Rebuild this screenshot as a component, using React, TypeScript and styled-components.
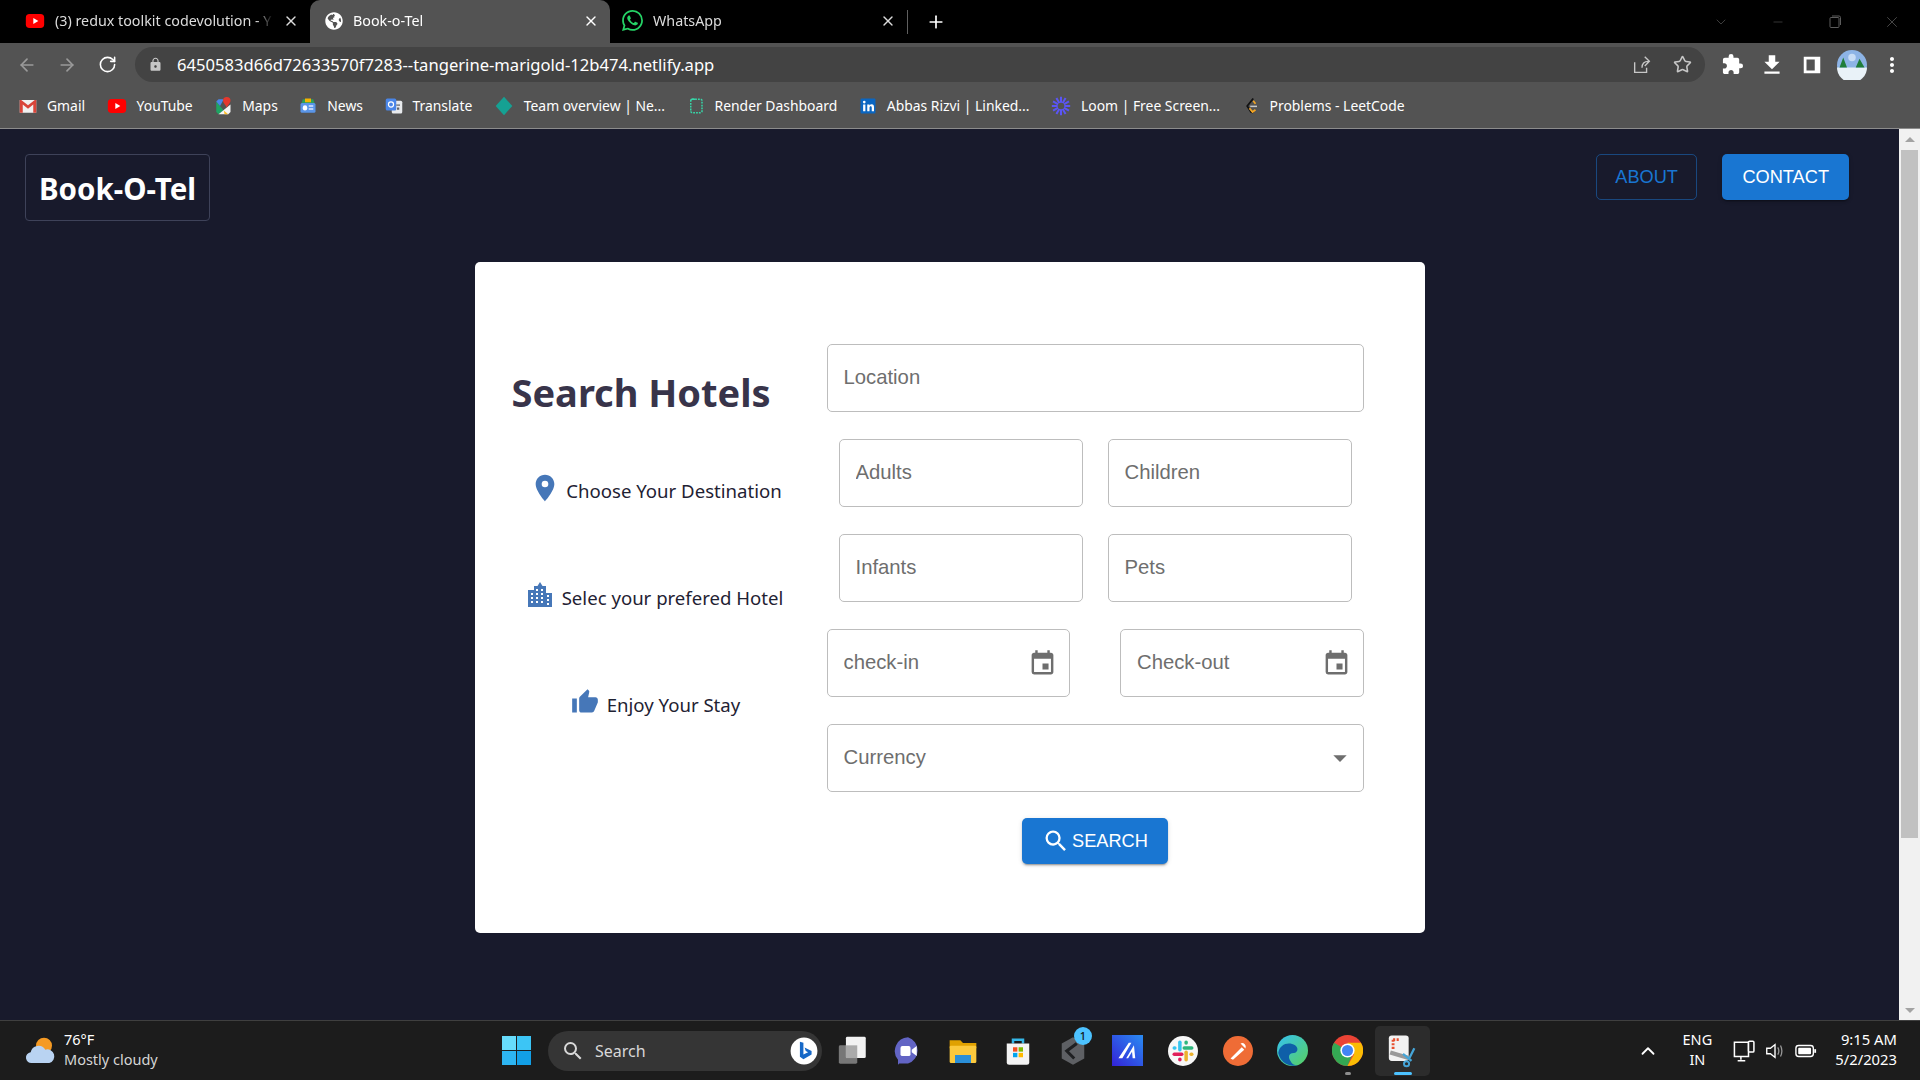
import styled, { createGlobalStyle } from "styled-components";
import { ArrowLeft, ArrowRight, RotateCw, Star, X, Plus, Minus, ChevronDown, ChevronUp } from "lucide-react";
import {
  MdLocationOn,
  MdThumbUp,
  MdEvent,
  MdSearch,
  MdArrowDropDown,
  MdLock,
  MdExtension,
  MdFileDownload,
  MdMoreVert,
  MdArrowDropUp,
} from "react-icons/md";
import { SiWhatsapp } from "react-icons/si";
import { FaGlobeAmericas } from "react-icons/fa";
import { ReactNode } from "react";

const GlobalStyle = createGlobalStyle`
  html, body {
    margin: 0;
    height: 100%;
    overflow: hidden;
  }
  * { box-sizing: border-box; }
`;

const UI_FONT = `"Noto Sans", "Open Sans", sans-serif`;
const MUI_FONT = `"Liberation Sans", Arial, sans-serif`;

const Screen = styled.div`
  width: 1920px;
  height: 1080px;
  display: flex;
  flex-direction: column;
  font-family: ${UI_FONT};
`;

/* browser chrome */
const TabStrip = styled.div`
  height: 43px;
  background: #000;
  display: flex;
  align-items: stretch;
  color: #fff;
  font-size: 14px;
`;

const Tab = styled.div<{ $w: number; $active?: boolean; $pl: number }>`
  position: relative;
  width: ${(p) => p.$w}px;
  padding: 0 11px 2px ${(p) => p.$pl}px;
  display: flex;
  align-items: center;
  gap: 10px;
  color: ${(p) => (p.$active ? "#fff" : "#dcdcdc")};
  background: ${(p) => (p.$active ? "#535353" : "transparent")};
  border-radius: 10px 10px 0 0;
`;

const TabTitle = styled.span`
  flex: 1;
  white-space: nowrap;
  font-size: 14.3px;
  mask-image: linear-gradient(to right, #000 92%, transparent 100%);
`;

const TabDivider = styled.div`
  width: 1px;
  height: 24px;
  align-self: center;
  background: #5f5f5f;
`;

const NewTab = styled.div`
  width: 56px;
  display: flex;
  align-items: center;
  justify-content: center;
`;

const WindowControls = styled.div`
  margin-left: auto;
  display: flex;
  align-items: center;
  color: #5c5c5c;
  padding-right: 0;
`;

const WindowButton = styled.div`
  width: 57px;
  height: 38px;
  display: flex;
  align-items: center;
  justify-content: center;
`;

const Toolbar = styled.div`
  height: 43px;
  background: #535353;
  display: flex;
  align-items: center;
  color: #fff;
  padding-left: 7px;
`;

const NavIcon = styled.div<{ $dim?: boolean }>`
  width: 40px;
  display: flex;
  justify-content: center;
  color: ${(p) => (p.$dim ? "#9a9a9a" : "#fff")};
`;

const Omnibox = styled.div`
  margin-left: 8px;
  width: 1570px;
  height: 35px;
  border-radius: 18px;
  background: #434343;
  display: flex;
  align-items: center;
  padding: 0 3px 0 13px;
  color: #c7c7c7;
`;

const Url = styled.span`
  margin-left: 14px;
  flex: 1;
  color: #fff;
  font-size: 16.6px;
`;

const OmniAction = styled.div`
  width: 40px;
  display: flex;
  justify-content: center;
`;

const ToolActions = styled.div`
  display: flex;
  align-items: center;
  margin-left: 7px;
`;

const ToolAction = styled.div`
  width: 40px;
  display: flex;
  justify-content: center;
  align-items: center;
`;

const BookmarkBar = styled.div`
  height: 43px;
  background: #535353;
  border-bottom: 1px solid #8c8c8c;
  display: flex;
  align-items: center;
  padding: 0 0 3px 19px;
  gap: 21.5px;
  color: #fff;
  font-size: 13.9px;
`;

const Bookmark = styled.div`
  display: flex;
  align-items: center;
  gap: 10px;
  white-space: nowrap;
`;

/* page */
const Viewport = styled.div`
  flex: 1;
  display: flex;
  min-height: 0;
`;

const Page = styled.main`
  flex: 1;
  background: #181a2c;
  padding: 25px 25px 0;
`;

const Nav = styled.nav`
  display: flex;
  justify-content: space-between;
  align-items: flex-start;
  padding-right: 25px;
`;

const Logo = styled.div`
  width: 185px;
  height: 67px;
  border: 1px solid #3e4259;
  border-radius: 4px;
  padding-top: 1px;
  display: flex;
  align-items: center;
  justify-content: center;
  color: #fff;
  font-size: 29.5px;
  font-weight: 700;
`;

const NavButtons = styled.div`
  display: flex;
  gap: 25px;
`;

const Button = styled.button<{ $outlined?: boolean }>`
  font-family: ${MUI_FONT};
  font-size: 18.2px;
  border-radius: 5px;
  cursor: pointer;
  height: 46px;
  padding: 0 ${(p) => (p.$outlined ? 18.5 : 20)}px;
  display: flex;
  align-items: center;
  color: ${(p) => (p.$outlined ? "#1976d2" : "#fff")};
  background: ${(p) => (p.$outlined ? "transparent" : "#1976d2")};
  border: ${(p) => (p.$outlined ? "1px solid rgba(25,118,210,.5)" : "none")};
  box-shadow: ${(p) => (p.$outlined ? "none" : "0 3px 1px -2px rgba(0,0,0,.2), 0 2px 2px 0 rgba(0,0,0,.14), 0 1px 5px 0 rgba(0,0,0,.12)")};
`;

const Card = styled.section`
  width: 950px;
  height: 671px;
  margin: 41px auto 0;
  background: #fff;
  border-radius: 5px;
  padding: 82px 61px 0 20px;
  display: flex;
  gap: 10px;
`;

const Intro = styled.div`
  width: 322px;
  padding-top: 24px;
  display: flex;
  flex-direction: column;
  align-items: center;
`;

const Title = styled.h1`
  align-self: flex-start;
  margin: 0 0 57px 17px;
  font-size: 38px;
  line-height: 48px;
  font-weight: 700;
  white-space: nowrap;
  color: #38344a;
`;

const Step = styled.div<{ $gap: number }>`
  height: 34px;
  margin-bottom: 73px;
  display: flex;
  align-items: center;
  gap: ${(p) => p.$gap}px;
  font-size: 18.6px;
  color: #1f2233;
  svg { color: #4677b8; flex: none; margin-top: -5px; }
`;

const FormColumn = styled.form`
  width: 537px;
  display: flex;
  flex-direction: column;
  gap: 27px;
`;

const FieldRow = styled.div<{ $inset?: boolean; $gap: number }>`
  display: flex;
  gap: ${(p) => p.$gap}px;
  padding: 0 ${(p) => (p.$inset ? 12 : 0)}px;
`;

const FieldBox = styled.div`
  flex: 1 1 0;
  min-width: 0;
  height: 68px;
  border: 1px solid #bdbdbd;
  border-radius: 5px;
  display: flex;
  align-items: center;
  position: relative;
  color: #6e6e6e;
`;

const FieldInput = styled.input`
  flex: 1;
  min-width: 0;
  width: 100%;
  height: 100%;
  border: none;
  outline: none;
  background: transparent;
  padding: 0 0 2px 16px;
  font-family: ${MUI_FONT};
  font-size: 20.3px;
  &::placeholder { color: #6e6e6e; opacity: 1; }
`;

const FieldIcon = styled.span<{ $pr: number }>`
  display: flex;
  padding-right: ${(p) => p.$pr}px;
`;

const SubmitRow = styled.div`
  display: flex;
  justify-content: center;
  margin-top: -1px;
`;

const SearchButton = styled(Button)`
  width: 146px;
  padding: 0;
  justify-content: center;
  gap: 2px;
`;

const ScrollTrack = styled.div`
  width: 21px;
  background: #f1f1f1;
  display: flex;
  flex-direction: column;
  align-items: center;
  color: #a3a3a3;
`;

const ScrollArrow = styled.div<{ $end?: boolean }>`
  height: 21px;
  margin-top: ${(p) => (p.$end ? "auto" : 0)};
  display: flex;
  align-items: center;
  justify-content: center;
`;

const ScrollThumb = styled.div`
  width: 17px;
  height: 688px;
  background: #c1c1c1;
`;

/* taskbar */
const Taskbar = styled.footer`
  height: 60px;
  background: #1c1c1c;
  border-top: 1px solid #3f3f3f;
  display: flex;
  align-items: center;
  color: #fff;
  font-family: ${UI_FONT};
`;

const Weather = styled.div`
  width: 502px;
  padding-left: 24px;
  display: flex;
  align-items: center;
  gap: 8px;
`;

const WeatherText = styled.div`
  font-size: 14.5px;
  line-height: 20px;
  margin-top: -4px;
  span { display: block; color: #d5d5d5; }
`;

const SearchPill = styled.div`
  margin-left: 17px;
  width: 274px;
  height: 40px;
  border-radius: 20px;
  background: #353535;
  display: flex;
  align-items: center;
  padding: 0 4px 0 13px;
  gap: 10px;
  color: #d8d8d8;
  font-size: 16px;
  span { flex: 1; }
`;

const AppIcons = styled.div`
  display: flex;
  margin-left: 3px;
`;

const AppIcon = styled.div<{ $active?: boolean }>`
  position: relative;
  width: 55px;
  height: 50px;
  display: flex;
  align-items: center;
  justify-content: center;
  border-radius: 5px;
  background: ${(p) => (p.$active ? "#2c2c2c" : "transparent")};
`;

const RunDot = styled.i<{ $active?: boolean }>`
  position: absolute;
  bottom: 1px;
  left: 50%;
  transform: translateX(-50%);
  width: ${(p) => (p.$active ? 18 : 6)}px;
  height: 3px;
  border-radius: 2px;
  background: ${(p) => (p.$active ? "#4cc2ff" : "#8e8e8e")};
`;

const Badge = styled.b`
  position: absolute;
  top: 1px;
  right: 8px;
  width: 18px;
  height: 18px;
  border-radius: 50%;
  background: #4cc2ff;
  color: #111;
  font-size: 11px;
  font-weight: 500;
  text-align: center;
  line-height: 18px;
`;

const Tray = styled.div`
  margin-left: auto;
  padding-right: 23px;
  display: flex;
  align-items: center;
`;

const TrayText = styled.div<{ $align: string; $ml?: number; $size: number }>`
  font-size: ${(p) => p.$size}px;
  line-height: 20px;
  margin-top: -3px;
  margin-left: ${(p) => p.$ml ?? 0}px;
  text-align: ${(p) => p.$align};
`;

const TrayIcons = styled.div`
  display: flex;
  align-items: center;
  gap: 9px;
  margin: 0 18px 0 17px;
`;

const Svg = ({ size = 18, box = 24, children }: { size?: number; box?: number; children: ReactNode }) => (
  <svg width={size} height={size} viewBox={`0 0 ${box} ${box}`} style={{ flex: "none" }}>
    {children}
  </svg>
);

const YouTubeIcon = () => (
  <Svg size={20}>
    <rect x="1" y="3.5" width="22" height="17" rx="4.5" fill="#f00" />
    <path d="M10 8.5l6 3.5-6 3.5z" fill="#fff" />
  </Svg>
);
const GmailIcon = () => (
  <Svg>
    <path d="M1 4h22v17H1z" fill="#f1f1f1" />
    <path d="M1 4v17h4V10l7 5.5 7-5.5v11h4V4h-2l-9 7-9-7z" fill="#d9453a" />
  </Svg>
);
const MapsIcon = () => (
  <Svg>
    <path d="M3 6l10 12-7 5-3-3z" fill="#1fa463" />
    <path d="M6 23L22 10v10l-3 3z" fill="#f5f5f5" />
    <path d="M3 6l3-3h7l-5 9z" fill="#4a86e8" />
    <path d="M13 18l6 5h-5z" fill="#fbc02d" />
    <path d="M17 0a5 5 0 0 1 5 5c0 3-3 5-5 9-2-4-5-6-5-9a5 5 0 0 1 5-5z" fill="#e5382e" />
  </Svg>
);
const NewsIcon = () => (
  <Svg>
    <path d="M5 3h14l2 6H3z" fill="#2e9e58" />
    <rect x="8" y="2" width="8" height="5" fill="#f4b400" />
    <rect x="2" y="8" width="20" height="13" rx="2" fill="#5a95e8" />
    <rect x="5" y="11" width="6" height="7" rx="3" fill="#fff" />
    <rect x="13" y="11" width="6" height="2" fill="#dbe8fb" />
    <rect x="13" y="15" width="6" height="2" fill="#dbe8fb" />
  </Svg>
);
const TranslateIcon = () => (
  <Svg>
    <rect x="9" y="5" width="14" height="17" rx="2" fill="#e8eaed" />
    <rect x="1" y="2" width="14" height="16" rx="2" fill="#4a86e8" />
    <circle cx="8" cy="10" r="3.4" fill="none" stroke="#fff" strokeWidth="1.6" />
    <rect x="15" y="10" width="5" height="1.6" fill="#5f6368" />
    <rect x="16" y="14" width="3" height="3" fill="#5f6368" />
  </Svg>
);
const TeamIcon = () => (
  <Svg size={20}>
    <path d="M12 1l10 11-10 11L2 12z" fill="#15a193" />
  </Svg>
);
const RenderIcon = () => (
  <Svg>
    <rect x="5" y="3" width="15" height="18" rx="2" fill="none" stroke="#37d6a8" strokeWidth="2" strokeDasharray="2.4 1.4" />
    <path d="M5 5a2 2 0 0 1 2-2h4" fill="none" stroke="#37d6a8" strokeWidth="2" />
  </Svg>
);
const LinkedInIcon = () => (
  <Svg>
    <rect x="2" y="2" width="20" height="20" rx="1.5" fill="#0a66c2" />
    <rect x="5.5" y="10" width="3" height="9" fill="#fff" />
    <circle cx="7" cy="6.8" r="1.8" fill="#fff" />
    <path d="M11 10h3v1.4c.7-1 1.700-1.600 3-1.600 2.200 0 3 1.500 3 4V19h-3v-4.600c0-1.200-.4-2-1.400-2-1.100 0-1.600.8-1.600 2V19h-3z" fill="#fff" />
  </Svg>
);
const LoomIcon = () => (
  <Svg size={20}>
    <g stroke="#5b55f5" strokeWidth="2.4">
      {[0, 30, 60, 90, 120, 150].map((a) => (
        <path key={a} d="M12 1v22" transform={`rotate(${a} 12 12)`} />
      ))}
    </g>
    <circle cx="12" cy="12" r="4" fill="#535353" />
  </Svg>
);
const LeetCodeIcon = () => (
  <Svg>
    <path d="M15 2L7 12l5 8 3 1" fill="none" stroke="#111" strokeWidth="2.4" />
    <path d="M10 15l4 5 4-3" fill="none" stroke="#f5a623" strokeWidth="2.4" />
    <path d="M15 5l3 4" fill="none" stroke="#f5a623" strokeWidth="2.2" />
    <rect x="11" y="11.500" width="9" height="2" fill="#c9c9c9" />
  </Svg>
);

const BuildingIcon = () => (
  <svg width="24" height="25" viewBox="0 0 24 25">
    <path
      fillRule="evenodd"
      fill="currentColor"
      d="M0 8h6V4h3.500L12 0l2.500 4H18v7h6v14H0zM3 11v2h2v-2zM3 15v2h2v-2zM3 19v2h2v-2zM8 7v2h2V7zM8 11v2h2v-2zM8 15v2h2v-2zM8 19v2h2v-2zM13 7v2h2V7zM13 11v2h2v-2zM13 15v2h2v-2zM13 19v2h2v-2zM19 13v2h2v-2zM19 17v2h2v-2zM19 21v2h2v-2z"
    />
  </svg>
);

const SidePanelIcon = () => (
  <Svg size={22}>
    <path fillRule="evenodd" d="M3 3h18v18H3zM6 6v12h9V6z" fill="#fff" />
  </Svg>
);

const ShareIcon = () => (
  <Svg size={22}>
    <path d="M4 9v11h13v-5M12 15c0-5 3-7 7-7M15 3l5 5-5 5" fill="none" stroke="#c7c7c7" strokeWidth="1.500" />
  </Svg>
);

const Avatar = () => (
  <Svg size={30}>
    <circle cx="12" cy="12" r="12" fill="#8db4e6" />
    <path d="M0 14h24a12 12 0 0 1-24 0z" fill="#e9f2f8" />
    <path d="M2 14l3-8 3 8zM15 14l3-7 4 7z" fill="#1f7d3a" />
    <circle cx="12" cy="6" r="3" fill="#c8ddf5" />
  </Svg>
);

const WeatherIcon = () => (
  <Svg size={32}>
    <circle cx="15" cy="8" r="6" fill="#f59a23" />
    <path d="M6 21a4 4 0 0 1-1-8 6 6 0 0 1 11-2 5 5 0 0 1 3 10z" fill="#b9d3f2" />
  </Svg>
);

const WindowsLogo = () => (
  <Svg size={29}>
    <rect x="0" y="0" width="11.600" height="11.600" fill="#67dcfb" />
    <rect x="12.400" y="0" width="11.600" height="11.600" fill="#3cc5f5" />
    <rect x="0" y="12.400" width="11.600" height="11.600" fill="#2db5f2" />
    <rect x="12.400" y="12.400" width="11.600" height="11.600" fill="#129fe6" />
  </Svg>
);

const BingIcon = () => (
  <Svg size={28}>
    <circle cx="12" cy="12" r="11.500" fill="#fff" />
    <path d="M8.500 4l3 1v10l4-2-2-1-1-3 6 3v3l-7 4-3-2z" fill="#1668c7" />
  </Svg>
);

const TaskViewIcon = () => (
  <Svg size={34}>
    <rect x="2" y="8" width="13" height="13" rx="1" fill="#777" />
    <rect x="7" y="2" width="14" height="15" rx="1" fill="#f2f2f2" />
    <rect x="7" y="8" width="8" height="9" fill="#aaa" />
  </Svg>
);

const MeetIcon = () => (
  <Svg size={30}>
    <path d="M12 1a11 11 0 0 1 0 21H5l-1 1v-4a11 11 0 0 1 8-18z" fill="#6264c4" />
    <rect x="6" y="8" width="8" height="8" rx="1.500" fill="#fff" />
    <path d="M15 11l4-3v8l-4-3z" fill="#fff" />
  </Svg>
);

const FolderIcon = () => (
  <Svg size={32}>
    <path d="M2 4h8l2 2h10v4H2z" fill="#e0a100" />
    <rect x="2" y="8" width="20" height="13" rx="1" fill="#fbc93d" />
    <rect x="6" y="15" width="12" height="6" fill="#2a8fd8" />
  </Svg>
);

const StoreIcon = () => (
  <Svg size={30}>
    <path d="M8 6V3h8v3" fill="none" stroke="#35b7e8" strokeWidth="2" />
    <path d="M3 6h18v15a2 2 0 0 1-2 2H5a2 2 0 0 1-2-2z" fill="#f4f4f4" />
    <rect x="8" y="9" width="3.500" height="3.500" fill="#f25022" />
    <rect x="12.500" y="9" width="3.500" height="3.500" fill="#7fba00" />
    <rect x="8" y="13.500" width="3.500" height="3.500" fill="#00a4ef" />
    <rect x="12.500" y="13.500" width="3.500" height="3.500" fill="#ffb900" />
  </Svg>
);

const ShieldIcon = () => (
  <Svg size={30}>
    <path d="M12 1l9 5v12l-9 5-9-5V6z" fill="#5e6064" />
    <path d="M15 6l-8 6 6 6" fill="none" stroke="#1f2022" strokeWidth="2.400" />
  </Svg>
);

const MailIcon = () => (
  <Svg size={31}>
    <defs>
      <linearGradient id="mg" x1="0" y1="1" x2="1" y2="0">
        <stop offset="0" stopColor="#3322d8" />
        <stop offset="1" stopColor="#2a8cf2" />
      </linearGradient>
    </defs>
    <rect x="0" y="0" width="24" height="24" fill="url(#mg)" />
    <path d="M5 18L13 6h2L8 18zM11 18l6-10 1 10h-2l-.500-5-3 5z" fill="#fff" />
  </Svg>
);

const SlackIcon = () => (
  <Svg size={30}>
    <circle cx="12" cy="12" r="12" fill="#f7f7f7" />
    <g strokeWidth="2.800" strokeLinecap="round">
      <path d="M9.500 5v6" stroke="#36c5f0" />
      <path d="M5 14.500h6" stroke="#e01e5a" />
      <path d="M14.500 13v6" stroke="#ecb22e" />
      <path d="M13 9.500h6" stroke="#2eb67d" />
    </g>
    <g strokeWidth="2.800" strokeLinecap="round">
      <path d="M5 9.500h.5" stroke="#36c5f0" />
      <path d="M9.500 19v-.5" stroke="#e01e5a" />
      <path d="M19 14.500h-.5" stroke="#ecb22e" />
      <path d="M14.500 5v.5" stroke="#2eb67d" />
    </g>
  </Svg>
);

const PostmanIcon = () => (
  <Svg size={30}>
    <circle cx="12" cy="12" r="12" fill="#ef6c36" />
    <path d="M6 18l9-9 2 2-9 8zM14 6a3 3 0 0 1 4 4z" fill="#fff" />
  </Svg>
);

const EdgeIcon = () => (
  <Svg size={31}>
    <defs>
      <linearGradient id="eg" x1="0" y1="0" x2="1" y2="1">
        <stop offset="0" stopColor="#35c1f1" />
        <stop offset="1" stopColor="#58d15f" />
      </linearGradient>
    </defs>
    <circle cx="12" cy="12" r="12" fill="url(#eg)" />
    <path d="M1 14C2 7 9 5 14 8c3 2 2 6-1 6-4 0-5 3-2 7 1 2 4 2.500 6 2A12 12 0 0 1 1 14z" fill="#0f5fa8" />
  </Svg>
);

const ChromeIcon = () => (
  <Svg size={31}>
    <circle cx="12" cy="12" r="12" fill="#ea4335" />
    <path d="M12 12L1.600 6A12 12 0 0 0 12 24l5-12z" fill="#34a853" />
    <path d="M12 24A12 12 0 0 0 22.400 6H12l5 9z" fill="#fbbc04" />
    <circle cx="12" cy="12" r="5.500" fill="#fff" />
    <circle cx="12" cy="12" r="4.300" fill="#4285f4" />
  </Svg>
);

const SnipIcon = () => (
  <Svg size={34}>
    <rect x="2" y="1" width="14" height="18" rx="2" fill="#f2f2f2" />
    <path d="M5 4h5M5 4v7" stroke="#e8502f" strokeWidth="2" strokeDasharray="1.500 1" fill="none" />
    <path d="M3 13l13 4" stroke="#999" strokeWidth="3" />
    <path d="M20 10l-4 8M12 14l6 5" stroke="#45a5d8" strokeWidth="1.600" fill="none" />
    <circle cx="14.500" cy="21" r="1.800" fill="none" stroke="#45a5d8" strokeWidth="1.400" />
  </Svg>
);

const MonitorIcon = () => (
  <Svg size={26}>
    <g transform="translate(3 0)">
      <path d="M2 4h13v13H2zM8 17v3M5 21h7" fill="none" stroke="#fff" strokeWidth="1.400" />
      <rect x="15" y="3" width="5" height="10" rx="1" fill="#1c1c1c" stroke="#fff" strokeWidth="1.400" />
    </g>
  </Svg>
);

const VolumeIcon = () => (
  <Svg size={22}>
    <path d="M3 9v6h4l5 4V5L7 9z" fill="none" stroke="#fff" strokeWidth="1.500" />
    <path d="M15 8c1.500 2.500 1.500 5.500 0 8M18 6c2 4 2 8 0 12" fill="none" stroke="#999" strokeWidth="1.400" />
  </Svg>
);

const BatteryIcon = () => (
  <Svg size={22}>
    <rect x="1" y="6" width="19" height="12" rx="3" fill="#1c1c1c" stroke="#fff" strokeWidth="1.500" />
    <rect x="3.500" y="8.500" width="14" height="7" rx="1" fill="#fff" />
    <rect x="21" y="10" width="2" height="4" fill="#fff" />
  </Svg>
);

const bookmarks: [string, ReactNode][] = [
  ["Gmail", <GmailIcon />],
  ["YouTube", <YouTubeIcon />],
  ["Maps", <MapsIcon />],
  ["News", <NewsIcon />],
  ["Translate", <TranslateIcon />],
  ["Team overview | Ne...", <TeamIcon />],
  ["Render Dashboard", <RenderIcon />],
  ["Abbas Rizvi | Linked...", <LinkedInIcon />],
  ["Loom | Free Screen...", <LoomIcon />],
  ["Problems - LeetCode", <LeetCodeIcon />],
];

const App = () => {
  return (
    <Screen>
      <GlobalStyle />
      <TabStrip>
        <Tab $w={310} $pl={25}>
          <YouTubeIcon />
          <TabTitle>(3) redux toolkit codevolution - Y</TabTitle>
          <X size={16} />
        </Tab>
        <Tab $w={300} $pl={15} $active>
          <FaGlobeAmericas size={18} />
          <TabTitle>Book-o-Tel</TabTitle>
          <X size={16} />
        </Tab>
        <Tab $w={297} $pl={12}>
          <SiWhatsapp size={21} color="#25d366" />
          <TabTitle>WhatsApp</TabTitle>
          <X size={16} />
        </Tab>
        <TabDivider />
        <NewTab>
          <Plus size={20} />
        </NewTab>
        <WindowControls>
          <WindowButton>
            <ChevronDown size={16} strokeWidth={1} />
          </WindowButton>
          <WindowButton>
            <Minus size={14} strokeWidth={1} />
          </WindowButton>
          <WindowButton>
            <svg width="12" height="13" viewBox="0 0 12 13" fill="none" stroke="currentColor">
              <rect x="1" y="2.500" width="9" height="10" rx="1" />
              <path d="M3 1h7a1.500 1.500 0 0 1 1.500 1.500V10" />
            </svg>
          </WindowButton>
          <WindowButton>
            <X size={18} strokeWidth={1} />
          </WindowButton>
        </WindowControls>
      </TabStrip>

      <Toolbar>
        <NavIcon $dim>
          <ArrowLeft size={20} />
        </NavIcon>
        <NavIcon $dim>
          <ArrowRight size={20} />
        </NavIcon>
        <NavIcon>
          <RotateCw size={19} />
        </NavIcon>
        <Omnibox>
          <MdLock size={15} />
          <Url>6450583d66d72633570f7283--tangerine-marigold-12b474.netlify.app</Url>
          <OmniAction>
            <ShareIcon />
          </OmniAction>
          <OmniAction>
            <Star size={19} />
          </OmniAction>
        </Omnibox>
        <ToolActions>
          <ToolAction>
            <MdExtension size={23} />
          </ToolAction>
          <ToolAction>
            <MdFileDownload size={26} />
          </ToolAction>
          <ToolAction>
            <SidePanelIcon />
          </ToolAction>
          <ToolAction>
            <Avatar />
          </ToolAction>
          <ToolAction>
            <MdMoreVert size={24} />
          </ToolAction>
        </ToolActions>
      </Toolbar>

      <BookmarkBar>
        {bookmarks.map(([label, icon]) => (
          <Bookmark key={label}>
            {icon}
            {label}
          </Bookmark>
        ))}
      </BookmarkBar>

      <Viewport>
        <Page>
          <Nav>
            <Logo>Book-O-Tel</Logo>
            <NavButtons>
              <Button $outlined>ABOUT</Button>
              <Button>CONTACT</Button>
            </NavButtons>
          </Nav>
          <Card>
            <Intro>
              <Title>Search Hotels</Title>
              <Step $gap={5}>
                <MdLocationOn size={32} />
                Choose Your Destination
              </Step>
              <Step $gap={10}>
                <BuildingIcon />
                Selec your prefered Hotel
              </Step>
              <Step $gap={8}>
                <MdThumbUp size={28} />
                Enjoy Your Stay
              </Step>
            </Intro>
            <FormColumn>
              <FieldRow $gap={0}>
                <FieldBox>
                  <FieldInput placeholder="Location" />
                </FieldBox>
              </FieldRow>
              <FieldRow $inset $gap={25}>
                <FieldBox>
                  <FieldInput placeholder="Adults" />
                </FieldBox>
                <FieldBox>
                  <FieldInput placeholder="Children" />
                </FieldBox>
              </FieldRow>
              <FieldRow $inset $gap={25}>
                <FieldBox>
                  <FieldInput placeholder="Infants" />
                </FieldBox>
                <FieldBox>
                  <FieldInput placeholder="Pets" />
                </FieldBox>
              </FieldRow>
              <FieldRow $gap={50}>
                <FieldBox>
                  <FieldInput placeholder="check-in" />
                  <FieldIcon $pr={12}>
                    <MdEvent size={29} />
                  </FieldIcon>
                </FieldBox>
                <FieldBox>
                  <FieldInput placeholder="Check-out" />
                  <FieldIcon $pr={12}>
                    <MdEvent size={29} />
                  </FieldIcon>
                </FieldBox>
              </FieldRow>
              <FieldRow $gap={0}>
                <FieldBox>
                  <FieldInput placeholder="Currency" />
                  <FieldIcon $pr={7}>
                    <MdArrowDropDown size={32} />
                  </FieldIcon>
                </FieldBox>
              </FieldRow>
              <SubmitRow>
                <SearchButton type="button">
                  <MdSearch size={28} />
                  SEARCH
                </SearchButton>
              </SubmitRow>
            </FormColumn>
          </Card>
        </Page>
        <ScrollTrack>
          <ScrollArrow>
            <MdArrowDropUp size={24} />
          </ScrollArrow>
          <ScrollThumb />
          <ScrollArrow $end>
            <MdArrowDropDown size={24} />
          </ScrollArrow>
        </ScrollTrack>
      </Viewport>

      <Taskbar>
        <Weather>
          <WeatherIcon />
          <WeatherText>
            76°F
            <span>Mostly cloudy</span>
          </WeatherText>
        </Weather>
        <WindowsLogo />
        <SearchPill>
          <MdSearch size={24} />
          <span>Search</span>
          <BingIcon />
        </SearchPill>
        <AppIcons>
          <AppIcon>
            <TaskViewIcon />
          </AppIcon>
          <AppIcon>
            <MeetIcon />
          </AppIcon>
          <AppIcon>
            <FolderIcon />
          </AppIcon>
          <AppIcon>
            <StoreIcon />
          </AppIcon>
          <AppIcon>
            <ShieldIcon />
            <Badge>1</Badge>
          </AppIcon>
          <AppIcon>
            <MailIcon />
          </AppIcon>
          <AppIcon>
            <SlackIcon />
          </AppIcon>
          <AppIcon>
            <PostmanIcon />
          </AppIcon>
          <AppIcon>
            <EdgeIcon />
          </AppIcon>
          <AppIcon>
            <ChromeIcon />
            <RunDot />
          </AppIcon>
          <AppIcon $active>
            <SnipIcon />
            <RunDot $active />
          </AppIcon>
        </AppIcons>
        <Tray>
          <ChevronUp size={22} />
          <TrayText $align="center" $ml={24} $size={14.5}>
            ENG
            <br />
            IN
          </TrayText>
          <TrayIcons>
            <MonitorIcon />
            <VolumeIcon />
            <BatteryIcon />
          </TrayIcons>
          <TrayText $align="right" $size={14.8}>
            9:15 AM
            <br />
            5/2/2023
          </TrayText>
        </Tray>
      </Taskbar>
    </Screen>
  );
};

export default App;
